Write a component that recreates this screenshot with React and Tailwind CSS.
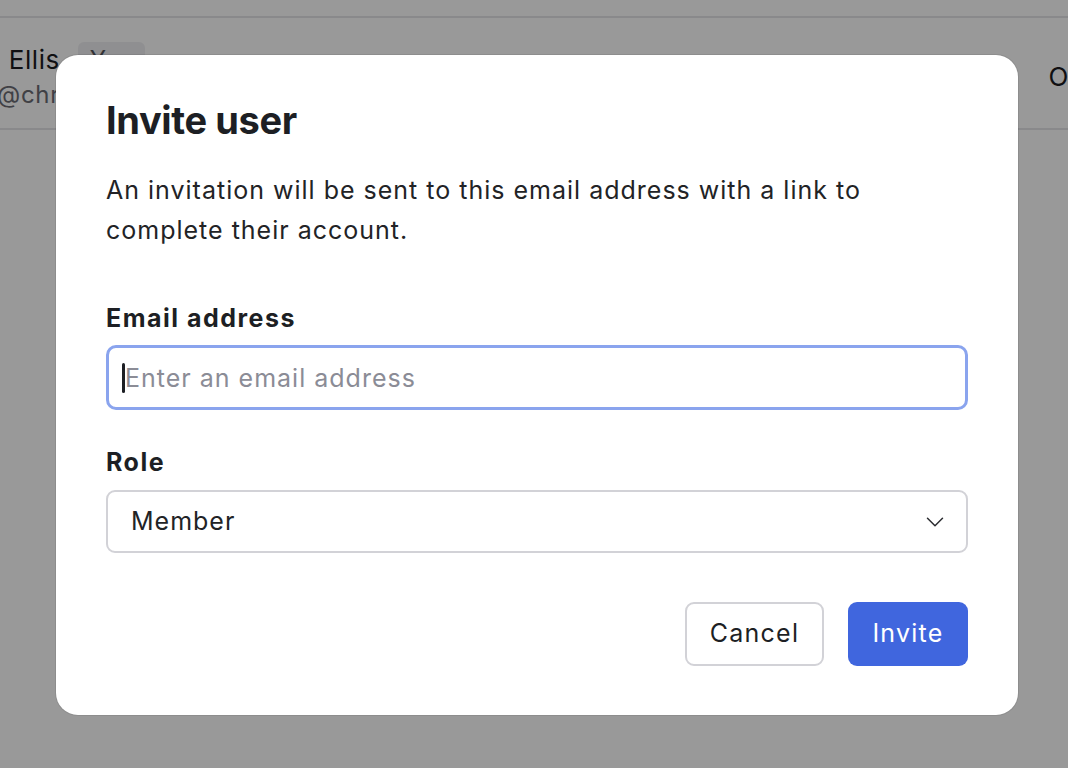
import { ChevronDown } from 'lucide-react'

// Fondo: la tabla de miembros, apagada por el overlay del diálogo.
function MembersBackdrop() {
  return (
    <div className="flex h-full flex-col">
      <div className="h-[18px] border-b-2 border-[#e4e4e8]" />
      <div className="flex h-[112px] items-center border-b-2 border-[#e4e4e8] pt-[8px]">
        <div className="ml-[-3px] flex flex-col">
          <div className="ml-[-70px] flex items-center gap-[18px]">
            <span className="text-[26px] leading-[34px] tracking-[0.02em] text-[#1c1c1f]">Chloe Ellis</span>
            <span className="rounded-md bg-[#efeff2] px-3 text-[24px] leading-[36px] text-[#55565c]">You</span>
          </div>
          <span className="text-[24px] leading-[34px] tracking-[0.03em] text-[#6b6c73]">@chrtellis</span>
        </div>
        <div className="flex-1" />
        <span className="mr-[-62px] text-[26px] leading-[34px] text-[#1c1c1f]">Owner</span>
      </div>
    </div>
  )
}

export default function App() {
  return (
    <div
      className="relative h-[768px] w-[1068px] overflow-hidden bg-white"
      style={{ fontFamily: 'Inter, "Noto Sans", sans-serif' }}
    >
      <MembersBackdrop />

      <div className="absolute inset-0 bg-black/40">
        <div className="pl-[56px] pt-[55px]">
          <div className="flex h-[660px] w-[962px] flex-col rounded-[22px] bg-white px-[50px] pt-[43px] shadow-[0_0_0_1px_rgba(0,0,0,0.08)]">
            <h1 className="text-[38px] font-bold leading-[44px] tracking-[-0.01em] text-[#1d1f24]">Invite user</h1>
            <p className="mt-[28px] text-[25px] leading-[40px] tracking-[0.04em] text-[#222326]">
              An invitation will be sent to this email address with a link to
              <br />
              complete their account.
            </p>

            <label className="mt-[52px] text-[25px] font-bold leading-[32px] tracking-[0.06em] text-[#1d1f24]">
              Email address
            </label>
            <div className="relative mt-[11px]">
              <input
                type="email"
                placeholder="Enter an email address"
                className="h-[65px] w-full rounded-[10px] border-[3px] border-[#8aa4ee] px-[16px] text-[25px] tracking-[0.04em] text-[#222326] caret-transparent outline-none placeholder:text-[#8b8c96]"
              />
              <span className="absolute left-[16px] top-[18px] h-[30px] w-[3px] rounded-full bg-[#1d1f24]" />
            </div>

            <label className="mt-[36px] text-[25px] font-bold leading-[32px] tracking-[0.06em] text-[#1d1f24]">Role</label>
            <button
              type="button"
              className="mt-[12px] flex h-[63px] w-full items-center justify-between rounded-[9px] border-2 border-[#d2d2d7] pl-[23px] pr-[16px] text-left text-[25px] tracking-[0.04em] text-[#222326]"
            >
              <span>Member</span>
              <ChevronDown size={30} strokeWidth={1.2} className="text-[#2b2c30]" />
            </button>

            <div className="mt-[49px] flex justify-end gap-[24px]">
              <button
                type="button"
                className="h-[64px] w-[139px] rounded-[9px] border-2 border-[#d2d2d7] text-[25px] tracking-[0.05em] text-[#1d1f24]"
              >
                Cancel
              </button>
              <button
                type="button"
                className="h-[64px] w-[120px] rounded-[9px] bg-[#4066de] text-[25px] tracking-[0.05em] text-white"
              >
                Invite
              </button>
            </div>
          </div>
        </div>
      </div>
    </div>
  )
}
